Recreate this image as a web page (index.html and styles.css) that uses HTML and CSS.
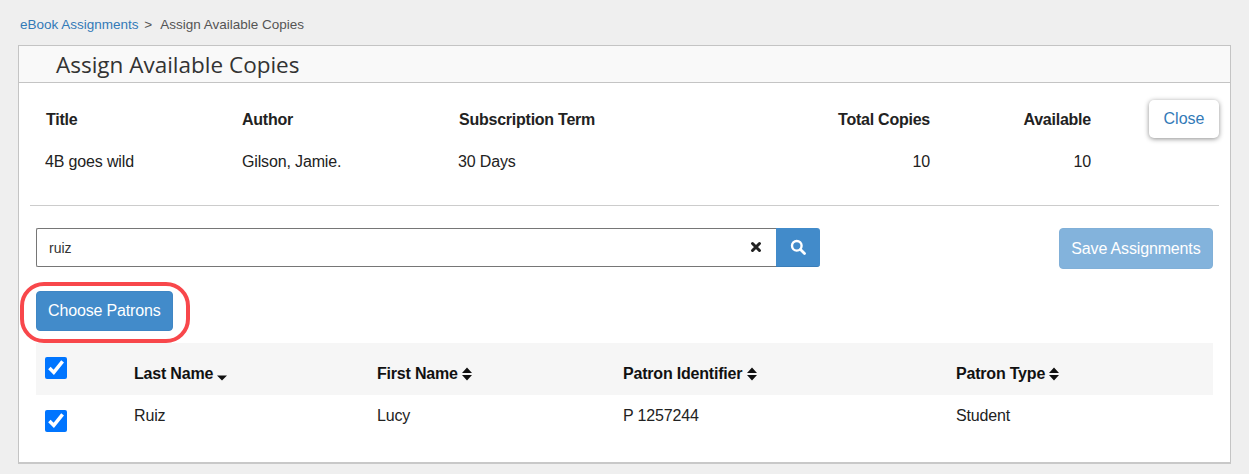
FILE: index.html
```html
<!DOCTYPE html>
<html>
  <head>
    <meta charset="UTF-8" />
    <title>Assign Available Copies</title>
    <link rel="stylesheet" href="styles.css">
  </head>
  <body>
    <nav class="breadcrumb">
      <a href="#">eBook Assignments</a>
      <span class="crumb-sep">&gt;</span>
      <span>Assign Available Copies</span>
    </nav>

    <section class="panel">
      <h1 class="panel-title">Assign Available Copies</h1>

      <div class="summary">
        <div class="summary-grid">
          <div class="summary-head">Title</div>
          <div class="summary-head">Author</div>
          <div class="summary-head">Subscription Term</div>
          <div class="summary-head num">Total Copies</div>
          <div class="summary-head num">Available</div>
          <div class="summary-cell">4B goes wild</div>
          <div class="summary-cell author">Gilson, Jamie.</div>
          <div class="summary-cell">30 Days</div>
          <div class="summary-cell num">10</div>
          <div class="summary-cell num">10</div>
        </div>
        <button class="btn-close">Close</button>
      </div>

      <hr class="divider" />

      <div class="toolbar">
        <div class="search">
          <div class="search-box">
            <input class="search-input" type="text" value="ruiz" />
            <svg class="search-clear" viewBox="0 0 12 12" width="12" height="12">
              <path d="M2.5 2.5l7 7M9.500 2.500l-7 7" stroke="#222" stroke-width="3" stroke-linecap="round" fill="none" />
            </svg>
          </div>
          <button class="btn-search">
            <svg viewBox="0 0 16 16" width="16" height="16">
              <circle cx="6.800" cy="6.800" r="4.800" stroke="#fff" stroke-width="2.400" fill="none" />
              <path d="M10.500 10.500l4 4" stroke="#fff" stroke-width="2.800" stroke-linecap="round" />
            </svg>
          </button>
        </div>
        <button class="btn btn-save">Save Assignments</button>
      </div>

      <div class="choose-row">
        <button class="btn">Choose Patrons</button>
        <span class="ring"></span>
      </div>

      <table class="patrons">
        <colgroup>
          <col class="col-check" />
          <col class="col-last" />
          <col class="col-first" />
          <col class="col-id" />
          <col />
        </colgroup>
        <thead>
          <tr>
            <th class="check-cell"><input type="checkbox" checked /></th>
            <th>Last Name <svg class="sort" viewBox="0 0 10 14" width="10" height="14"><path d="M0 8.500h10l-5 5z" /></svg></th>
            <th>First Name <svg class="sort" viewBox="0 0 10 14" width="10" height="14"><path d="M0 6h10l-5-5.500zM0 8h10l-5 5.500z" /></svg></th>
            <th>Patron Identifier <svg class="sort" viewBox="0 0 10 14" width="10" height="14"><path d="M0 6h10l-5-5.500zM0 8h10l-5 5.500z" /></svg></th>
            <th>Patron Type <svg class="sort" viewBox="0 0 10 14" width="10" height="14"><path d="M0 6h10l-5-5.500zM0 8h10l-5 5.500z" /></svg></th>
          </tr>
        </thead>
        <tbody>
          <tr>
            <td class="check-cell"><input type="checkbox" checked /></td>
            <td>Ruiz</td>
            <td>Lucy</td>
            <td>P 1257244</td>
            <td>Student</td>
          </tr>
        </tbody>
      </table>
    </section>
  </body>
</html>
```

FILE: styles.css
```css
body {
  margin: 0;
  padding: 0 18px;
  background-color: #efefef;
  font-family: "Liberation Sans", Arial, sans-serif;
  font-size: 16px;
  letter-spacing: -0.15px;
  color: #222222;
}
button {
  font-family: inherit;
  letter-spacing: inherit;
  cursor: pointer;
}
.breadcrumb {
  height: 45px;
  padding: 17px 0 0 2px;
  box-sizing: border-box;
  font-size: 13.5px;
  letter-spacing: 0;
  line-height: 16px;
  color: #555555;
}
.breadcrumb a {
  color: #337ab7;
  text-decoration: none;
}
.crumb-sep {
  margin: 0 5px 0 2px;
}
.panel {
  height: 419px;
  box-sizing: border-box;
  background-color: #ffffff;
  border: 1px solid #c4c4c4;
  border-bottom: 2px solid #c8c8c8;
}
.panel-title {
  margin: 0;
  height: 37px;
  box-sizing: border-box;
  padding-left: 37px;
  background-color: #f9f9f9;
  border-bottom: 1px solid #c4c4c4;
  font-family: "Open Sans", sans-serif;
  font-size: 22.5px;
  font-weight: 400;
  letter-spacing: 0;
  line-height: 37px;
  color: #333333;
}
.summary {
  display: flex;
  align-items: flex-start;
  padding: 17px 11px 0 27px;
  height: 122px;
  box-sizing: border-box;
}
.summary-grid {
  display: grid;
  grid-template-columns: 196px 217px 291px 180px 161px;
  grid-auto-rows: 42px;
  padding-top: 1px;
}
.summary-head {
  font-weight: bold;
  letter-spacing: -0.24px;
  line-height: 37px;
}
.summary-cell {
  line-height: 38px;
  margin-left: -1px;
}
.summary-cell.author {
  margin-left: 0;
}
.num {
  text-align: right;
}
.btn-close {
  margin-left: 58px;
  width: 70px;
  height: 38px;
  background-color: #ffffff;
  border: none;
  border-radius: 5px;
  box-shadow: 0px 1px 5px rgba(0, 0, 0, 0.45);
  color: #337ab7;
  font-size: 16px;
  letter-spacing: 0;
}
.divider {
  margin: 0 11px;
  border: none;
  border-top: 1px solid #cccccc;
}
.toolbar {
  display: flex;
  justify-content: space-between;
  align-items: flex-start;
  padding: 22px 17px 0 17px;
}
.search {
  display: flex;
  width: 784px;
  height: 39px;
}
.search-box {
  position: relative;
  flex: 1;
}
.search-input {
  width: 100%;
  height: 39px;
  box-sizing: border-box;
  padding: 0 12px;
  border: 1px solid #767676;
  border-right: none;
  border-radius: 2px 0 0 2px;
  font-family: inherit;
  font-size: 14px;
  color: #333333;
  outline: none;
}
.search-clear {
  position: absolute;
  top: 13px;
  right: 14px;
}
.btn-search {
  width: 44px;
  height: 39px;
  padding: 0;
  background-color: #428bca;
  border: none;
  border-bottom: 1px solid #3a7db8;
  border-radius: 0 3px 3px 0;
  display: flex;
  align-items: center;
  justify-content: center;
}
.btn {
  height: 40px;
  padding: 0 11px;
  background-color: #428bca;
  border: 1px solid #3f86c4;
  border-radius: 4px;
  color: #ffffff;
  font-size: 16px;
}
.btn-save {
  height: 41px;
  padding: 0 11.5px;
  opacity: 0.65;
}
.choose-row {
  position: relative;
  padding: 22px 17px 12px 17px;
}
.ring {
  position: absolute;
  left: 1px;
  top: 13px;
  width: 170px;
  height: 61px;
  box-sizing: border-box;
  border: 4px solid #f8474b;
  border-radius: 24px;
}
.patrons {
  width: 1177px;
  margin-left: 17px;
  border-collapse: collapse;
  table-layout: fixed;
}
.col-check {
  width: 98px;
}
.col-last {
  width: 243px;
}
.col-first {
  width: 246px;
}
.col-id {
  width: 333px;
}
.patrons th {
  height: 52px;
  padding: 10px 0 0 0;
  box-sizing: border-box;
  background-color: #f6f6f6;
  text-align: left;
  font-weight: bold;
  letter-spacing: -0.2px;
  color: #111111;
}
.patrons td {
  height: 52px;
  padding: 12px 0 0 0;
  box-sizing: border-box;
  vertical-align: top;
  line-height: 18px;
  color: #222222;
}
.patrons .check-cell {
  padding: 0 0 0 9px;
  vertical-align: top;
}
th.check-cell input {
  margin: 14px 0 0 0;
}
td.check-cell input {
  margin: 15px 0 0 0;
}
.patrons input {
  display: block;
  width: 22px;
  height: 22px;
}
.sort {
  vertical-align: -2px;
  fill: #111111;
}
```
